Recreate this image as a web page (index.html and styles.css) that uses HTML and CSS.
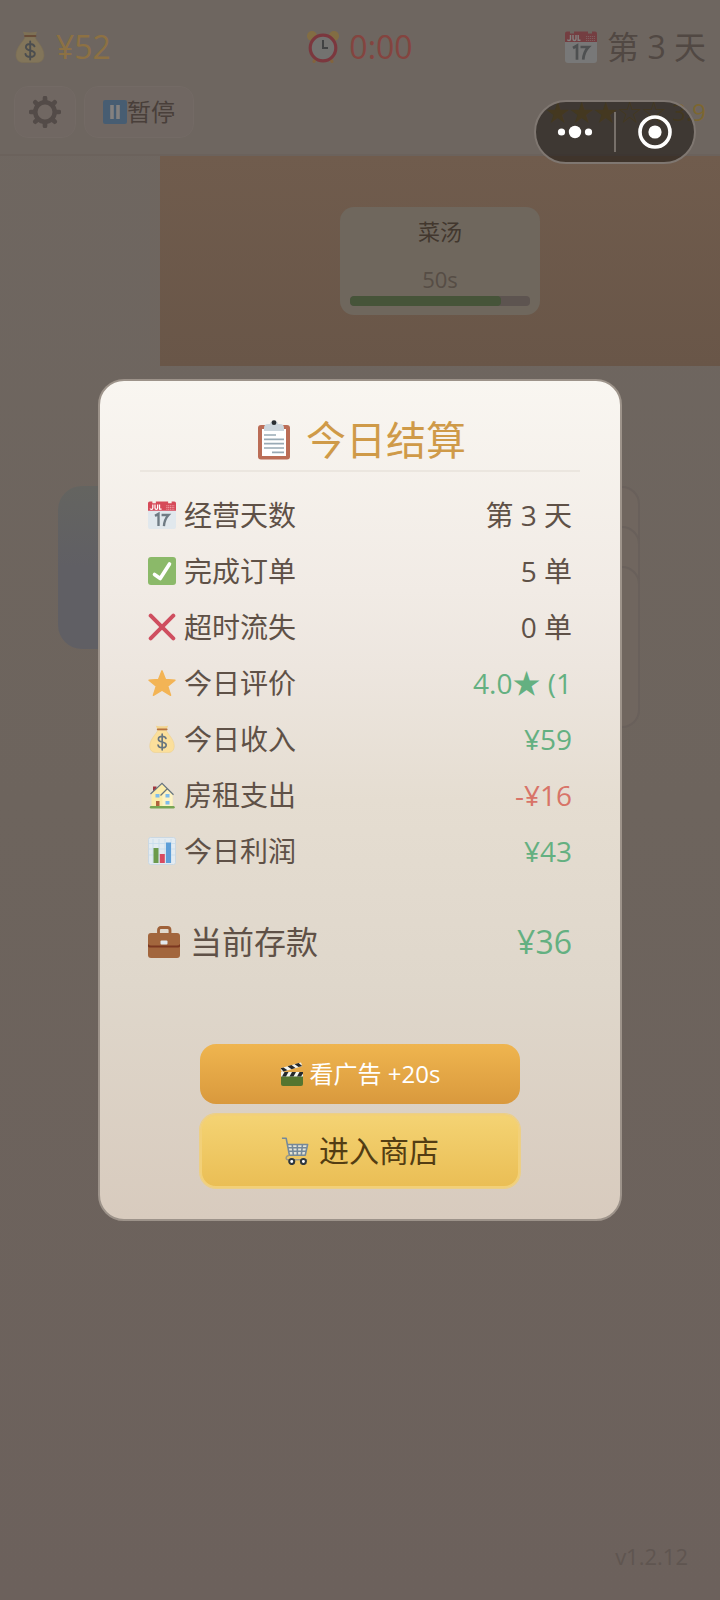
FILE: index.html
```html
<!DOCTYPE html>
<html lang="zh-CN">
<head>
<meta charset="utf-8">
<meta name="viewport" content="width=device-width, initial-scale=1">
<title>今日结算</title>
<link rel="stylesheet" href="styles.css">
</head>
<body>
<svg class="sprite" aria-hidden="true">
  <symbol id="bag" viewBox="0 0 32 32">
    <path d="M11 6 9 .8Q16 2.2 23 .8L21 6Z" fill="#f3d58f"/>
    <path d="M11 6h10c1 4 9 10 9 18 0 5-3 7.500-7 7.500H9c-4 0-7-2.500-7-7.500C2 16 10 10 11 6Z" fill="#fbdf9b" stroke="#e9cd8c" stroke-width=".6"/>
    <path d="M11 5h10.500" stroke="#b5713f" stroke-width="1.800" stroke-linecap="round"/>
    <path d="M20.500 15.300c-.6-1.600-2.200-2.300-4.300-2.300-2.600 0-4.300 1.200-4.300 3.200 0 4.400 8.900 2.200 8.900 6.600 0 2-1.900 3.200-4.600 3.200-2.500 0-4.300-1-4.700-3M16.200 10.500v18" fill="none" stroke="#67757f" stroke-width="1.900" stroke-linecap="round"/>
  </symbol>
  <symbol id="clock" viewBox="0 0 32 32">
    <circle cx="5" cy="5" r="5" fill="#fdc95c"/><circle cx="27" cy="5" r="5" fill="#fdc95c"/>
    <path d="m9 27-2 3.500M23 27l2 3.500" stroke="#fdb04c" stroke-width="3" stroke-linecap="round"/>
    <circle cx="16" cy="17" r="12.800" fill="#d4d8da" stroke="#e8374f" stroke-width="3.200"/>
    <path d="M16 9v8h5" fill="none" stroke="#4b555c" stroke-width="2"/>
  </symbol>
  <symbol id="calendar" viewBox="0 0 32 32">
    <path d="M0 10h32v19q0 3-3 3H3q-3 0-3-3Z" fill="#e1e8ed"/>
    <path d="M0 11V2.500Q0 .5 2 .5h3v2h4v-2h14v2h4v-2h3q2 0 2 2V11Z" fill="#d64a59"/>
    <path d="M5.500 4v4q0 1.500-1.500 1.500T2.500 8.500M8 4v4q0 1.500 1.500 1.500T11 8V4M13.200 4v5.300H15.500" fill="none" stroke="#fff" stroke-width="1.400"/>
    <path d="M21 5.500h9M21 7.500h9M21 9.500h9" stroke="#f1a3aa" stroke-width="1.200" stroke-dasharray="1.200 .8"/>
    <path d="m8 17 4-2.300v14M15.500 16h8q-4.800 5-5.300 12.700" fill="none" stroke="#6f7b84" stroke-width="2.700"/>
  </symbol>
  <symbol id="gear" viewBox="0 0 32 32">
    <circle cx="16" cy="16" r="9.700" fill="none" stroke="currentColor" stroke-width="4.500"/>
    <path d="M16 5V2M16 30v-3M5 16H2M30 16h-3M8.200 8.200 6.300 6.300M25.700 25.700l-1.900-1.900M8.200 23.800l-1.900 1.900M25.700 6.300l-1.900 1.900" stroke="currentColor" stroke-width="4.600" stroke-linecap="round"/>
  </symbol>
  <symbol id="pause" viewBox="0 0 24 24">
    <rect width="24" height="24" rx="2" fill="#5a9fdc"/>
    <path d="M9 5v14M15 5v14" stroke="#fff" stroke-width="3.600"/>
  </symbol>
  <symbol id="clipboard" viewBox="0 0 40 40">
    <rect x="4" y="5" width="32" height="34.500" rx="3" fill="#bb6d56"/>
    <path d="M8 9h24v27H8Z" fill="#fff"/>
    <path d="M10 11V8q0-4 4-4h2q.5-3.500 4-3.500T24 4h2q4 0 4 4v3Z" fill="#ccd6dd"/>
    <circle cx="20" cy="2.700" r="2.400" fill="#292f33"/>
    <path d="M10 15h12M10 19.300h20M10 23.600h20M10 28h20M18 32.300h12" stroke="#99aab5" stroke-width="1.700"/>
  </symbol>
  <symbol id="check" viewBox="0 0 28 28">
    <rect width="28" height="28" rx="3" fill="#8bb969"/>
    <path d="m6.500 17.500 5.700 4L21.500 7" fill="none" stroke="#fff" stroke-width="3.600" stroke-linecap="round" stroke-linejoin="round"/>
  </symbol>
  <symbol id="cross" viewBox="0 0 28 28">
    <path d="m2.700 2.700 22.600 22.600M25.300 2.700 2.700 25.300" stroke="#cf4e5f" stroke-width="4" stroke-linecap="round"/>
  </symbol>
  <symbol id="star" viewBox="0 0 28 28">
    <path d="m14 1.800 3.500 8.700 9.500.6-7.300 6 2.900 9.200L14 21.200l-8.600 5.100 2.900-9.200-7.300-6 9.500-.6Z" fill="#f3b455" stroke="#f3b455" stroke-width="1.400" stroke-linejoin="round"/>
  </symbol>
  <symbol id="house" viewBox="0 0 28 28">
    <path d="M5 10V5.500h3.500V9Z" fill="#a0363f"/>
    <path d="M3.500 26V12.500L14 3l5 5 5.500 5.500V26Z" fill="#fbecaa"/>
    <path d="M14.500 26V14l5-5 5 5v12Z" fill="#fdf3c4"/>
    <path d="M2.500 13 14 2.300l11.500 11.400M12.500 14.500 19 8" fill="none" stroke="#67757f" stroke-width="1.200"/>
    <path d="M7.500 13h4v3.500h-4ZM17.500 13h4v3.500h-4ZM17.500 20h4v3.500h-4Z" fill="#7dbcec"/>
    <path d="M8 20h3.500v5.500H8Z" fill="#b0623c"/>
    <path d="M3 26.300h22.500" stroke="#77a653" stroke-width="2.400" stroke-linecap="round"/>
  </symbol>
  <symbol id="chart" viewBox="0 0 28 28">
    <rect x=".5" y=".5" width="27" height="27" rx="2" fill="#e3ebf1" stroke="#cbd8e2"/>
    <path d="M5 2v24M11 2v24M17 2v24M23 2v24M1 6.500h26M1 12h26M1 18h26" stroke="#c5dcee" stroke-width=".8"/>
    <path d="M5.500 11h5v15h-5Z" fill="#6c9a4c"/><path d="M11.800 17h5v9h-5Z" fill="#d84a60"/><path d="M18 5.500h5V26h-5Z" fill="#5d9ed8"/>
  </symbol>
  <symbol id="briefcase" viewBox="0 0 32 32">
    <path d="M10.500 8V4q0-2.500 2.500-2.500h6.500Q22 1.500 22 4v4" fill="none" stroke="#9f6139" stroke-width="2.800"/>
    <rect y="7" width="32" height="25" rx="3" fill="#a2663d"/>
    <path d="M0 18v2q0 1.500 3 1.500h26q3 0 3-1.500v-2q-1 1.500-3 1.500H3q-2 0-3-1.500Z" fill="#7b3720"/>
    <rect x="12.500" y="14.500" width="7" height="4" rx="1" fill="#e1e8ed"/>
  </symbol>
  <symbol id="clapper" viewBox="0 0 24 24">
    <path d="M1 10.500h22V22q0 2-2 2H3q-2 0-2-2Z" fill="#55752f"/>
    <path d="M1 10h22v4.500H1Z" fill="#f3f4ee"/>
    <path d="m2 14.500 2.500-4.500h4L6 14.500ZM9.500 14.500 12 10h4l-2.500 4.500ZM17 14.500l2.500-4.500h3.500v1.500l-2 3Z" fill="#26292b"/>
    <path d="M.5 6.200 21 .4l1.200 3.800L1.700 10Z" fill="#f3f4ee"/>
    <path d="m.5 6.200 3-.8 4 2.900-4 1.100ZM7.500 4.200l4-1.100 4 3-4 1.100ZM14.600 2.200l4-1.100 3.600 3-3.600 1Z" fill="#26292b"/>
  </symbol>
  <symbol id="cart" viewBox="0 0 30 30">
    <path d="M6.500 8h22L26.500 19h-18Z" fill="#e3e3d4"/>
    <path d="M1 1.300h4.500L9 19.500H26L28.500 8H7M8 11.500h20M8.500 15.300h18.500M12 8l1.200 11M17.500 8v11M23 8l-1.200 11" fill="none" stroke="#75899a" stroke-width="1.700" stroke-linejoin="round"/>
    <path d="M9 19.500q-3.500.5-3.500 3 0 1.800 2 1.800H28" fill="none" stroke="#9d9a82" stroke-width="1.500"/>
    <circle cx="11.500" cy="26.300" r="2.700" fill="#fff" stroke="#30383d" stroke-width="2.200"/><circle cx="24" cy="26.300" r="2.700" fill="#fff" stroke="#30383d" stroke-width="2.200"/>
  </symbol>
</svg>

<div class="screen">
  <header class="hud">
    <div class="stats">
      <span class="stat money"><svg class="icon dim"><use href="#bag"/></svg>¥52</span>
      <span class="stat timer"><svg class="icon dim"><use href="#clock"/></svg>0:00</span>
      <span class="stat day"><svg class="icon dim"><use href="#calendar"/></svg>第 3 天</span>
    </div>
    <div class="tools">
      <button class="tool gear" type="button" aria-label="设置"><svg class="icon"><use href="#gear"/></svg></button>
      <button class="tool pause" type="button"><svg class="icon-small dim"><use href="#pause"/></svg>暂停</button>
      <span class="rating">★★★☆☆ 3.9</span>
    </div>
  </header>

  <section class="counter">
    <article class="order">
      <h2 class="dish">菜汤</h2>
      <p class="left-time">50s</p>
      <div class="bar"><div class="bar-fill" style="width:84%"></div></div>
    </article>
  </section>

  <section class="floor">
    <div class="station"></div>
    <div class="stack">
      <div class="plate"></div>
      <div class="plate"></div>
      <div class="plate"></div>
    </div>
  </section>
  <footer class="version">v1.2.12</footer>

  <div class="overlay">
    <section class="modal" role="dialog" aria-labelledby="modal-title">
      <h1 class="title" id="modal-title"><svg class="icon-title"><use href="#clipboard"/></svg>今日结算</h1>
      <dl class="rows">
        <div class="row"><dt><svg class="icon-row"><use href="#calendar"/></svg>经营天数</dt><dd>第 3 天</dd></div>
        <div class="row"><dt><svg class="icon-row"><use href="#check"/></svg>完成订单</dt><dd>5 单</dd></div>
        <div class="row"><dt><svg class="icon-row"><use href="#cross"/></svg>超时流失</dt><dd>0 单</dd></div>
        <div class="row"><dt><svg class="icon-row"><use href="#star"/></svg>今日评价</dt><dd class="good">4.0★ (1</dd></div>
        <div class="row"><dt><svg class="icon-row"><use href="#bag"/></svg>今日收入</dt><dd class="good">¥59</dd></div>
        <div class="row"><dt><svg class="icon-row"><use href="#house"/></svg>房租支出</dt><dd class="bad">-¥16</dd></div>
        <div class="row"><dt><svg class="icon-row"><use href="#chart"/></svg>今日利润</dt><dd class="good">¥43</dd></div>
        <div class="row total"><dt><svg class="icon"><use href="#briefcase"/></svg>当前存款</dt><dd class="good">¥36</dd></div>
      </dl>
      <div class="actions">
        <button class="action ad" type="button"><svg class="icon-small"><use href="#clapper"/></svg>看广告 +20s</button>
        <button class="action shop" type="button"><svg class="icon-row"><use href="#cart"/></svg>进入商店</button>
      </div>
    </section>
  </div>

  <div class="capsule">
    <button class="capsule-button" type="button" aria-label="更多"><svg width="36" height="36" viewBox="0 0 36 36" fill="#fff"><circle cx="4.500" cy="18" r="3.600"/><circle cx="18" cy="18" r="6.200"/><circle cx="31.500" cy="18" r="3.600"/></svg></button>
    <button class="capsule-button" type="button" aria-label="关闭"><svg width="36" height="36" viewBox="0 0 36 36"><circle cx="18" cy="18" r="15" fill="none" stroke="#fff" stroke-width="3.600"/><circle cx="18" cy="18" r="6.600" fill="#fff"/></svg></button>
  </div>
</div>
</body>
</html>
```
FILE: styles.css
```css
* { box-sizing: border-box; }
body, h1, h2, p, dl, dd { margin: 0; }
h1, h2 { font-weight: 400; }
body, button { font-family: "Open Sans", "Noto Sans CJK SC", sans-serif; }
button { border: 0; padding: 0; cursor: pointer; }
svg { flex: none; }

.sprite { position: absolute; width: 0; height: 0; }
.icon { width: 32px; height: 32px; }
.icon-small { width: 24px; height: 24px; }
.icon-row { width: 28px; height: 28px; }
.icon-title { width: 40px; height: 40px; }
.dim { filter: brightness(.56); opacity: .65; }

.screen {
  position: relative;
  display: flex;
  flex-direction: column;
  min-height: 100vh;
  background: linear-gradient(#6f6761, #6d645d 50%, #6c615c);
}

/* Top status area */
.hud {
  padding: 24px 14px 16px;
  background: #6e6660;
  border-bottom: 2px solid #6b625c;
}
.stats { display: grid; grid-template-columns: 1fr auto 1fr; height: 46px; }
.tools { display: flex; align-items: center; gap: 8px; margin-top: 16px; }
.stat {
  display: flex;
  align-items: center;
  gap: 10px;
  font-size: 32px;
  line-height: 46px;
  color: #514843;
}
.money { color: #8d7143; }
.timer { color: #84443f; }
.day { justify-content: flex-end; }
.tool {
  display: flex;
  align-items: center;
  justify-content: center;
  height: 52px;
  border: 1px solid #736a65;
  border-radius: 14px;
  background: #706762;
  color: #493f3a;
  font-size: 24px;
  line-height: 32px;
}
.gear { width: 62px; color: #534b48; }
.pause { padding: 0 18px; }
.rating { margin-left: auto; font-size: 24px; line-height: 32px; color: #7d6730; }

/* Order counter */
.counter {
  display: flex;
  justify-content: center;
  margin-left: 160px;
  padding: 51px 0;
  background: linear-gradient(#705c4d, #695648);
}
.order {
  width: 200px;
  padding: 8px 10px 9px;
  border-radius: 14px;
  background: #6f675d;
  text-align: center;
}
.dish { font-size: 22px; line-height: 32px; color: #42372e; }
.left-time { margin-top: 16px; font-size: 22px; line-height: 32px; color: #564d45; }
.bar { height: 10px; margin-top: 1px; border-radius: 4px; background: #5d5450; overflow: hidden; }
.bar-fill { height: 100%; border-radius: 4px; background: #465439; }

/* Kitchen floor */
.floor {
  display: flex;
  justify-content: space-between;
  padding: 120px 80px 0 58px;
}
.station {
  width: 200px;
  height: 163px;
  border-radius: 24px;
  background: linear-gradient(#646460, #605f64 50%, #605f64);
}
.stack { width: 160px; }
.plate {
  height: 162px;
  border: 2px solid #69605b;
  border-radius: 18px;
  background: #70665f;
}
.plate + .plate { margin-top: -122px; }
.version {
  margin-top: auto;
  padding: 0 32px 26px;
  text-align: right;
  font-size: 22px;
  line-height: 36px;
  color: #5f5550;
}

/* Daily summary dialog */
.overlay {
  position: absolute;
  inset: 0;
  display: flex;
  align-items: center;
  padding: 0 98px;
}
.modal {
  flex: 1;
  padding: 29px 40px 31px;
  border: 2px solid #9d938a;
  border-radius: 26px;
  background: linear-gradient(#f9f6f1, #f1ebe5 25%, #ede6df 34%, #e5ddd1 50%, #dfd7cb 72%, #d8cbbe);
}
.title {
  display: flex;
  align-items: center;
  justify-content: center;
  gap: 12px;
  height: 62px;
  border-bottom: 2px solid #ebe6df;
  font-size: 40px;
  line-height: 60px;
  color: #cf9a48;
}
.rows { padding: 15px 8px 0; }
.row {
  display: flex;
  align-items: center;
  justify-content: space-between;
  font-size: 28px;
  line-height: 56px;
  color: #5f5147;
}
.row dt { display: flex; align-items: center; gap: 8px; }
.total {
  margin-top: 31px;
  font-size: 32px;
  line-height: 64px;
}
.row .icon { margin-right: 2px; }
.good { color: #64b081; }
.bad { color: #d87468; }
.actions {
  display: flex;
  flex-direction: column;
  gap: 10px;
  padding: 70px 60px 0;
}
.action {
  display: flex;
  align-items: center;
  justify-content: center;
  border-radius: 16px;
}
.ad {
  gap: 6px;
  height: 60px;
  background: linear-gradient(#efb54f, #d9993d);
  color: #fff;
  font-size: 24px;
  line-height: 32px;
}
.shop {
  gap: 10px;
  height: 74px;
  border: 2px solid #f2d078;
  box-shadow: 0 0 0 1px #eccf87;
  background: linear-gradient(#f4d373, #eabe55);
  color: #533d13;
  font-size: 30px;
  line-height: 40px;
}

/* Host app menu */
.capsule {
  position: absolute;
  top: 100px;
  right: 24px;
  display: flex;
  width: 162px;
  height: 64px;
  padding: 10px 0;
  border: 2px solid #7f7771;
  border-radius: 32px;
  background: rgba(30, 25, 22, .6);
}
.capsule-button {
  display: flex;
  flex: 1;
  align-items: center;
  justify-content: center;
  background: none;
}
.capsule-button + .capsule-button { border-left: 2px solid #77706a; }
```
